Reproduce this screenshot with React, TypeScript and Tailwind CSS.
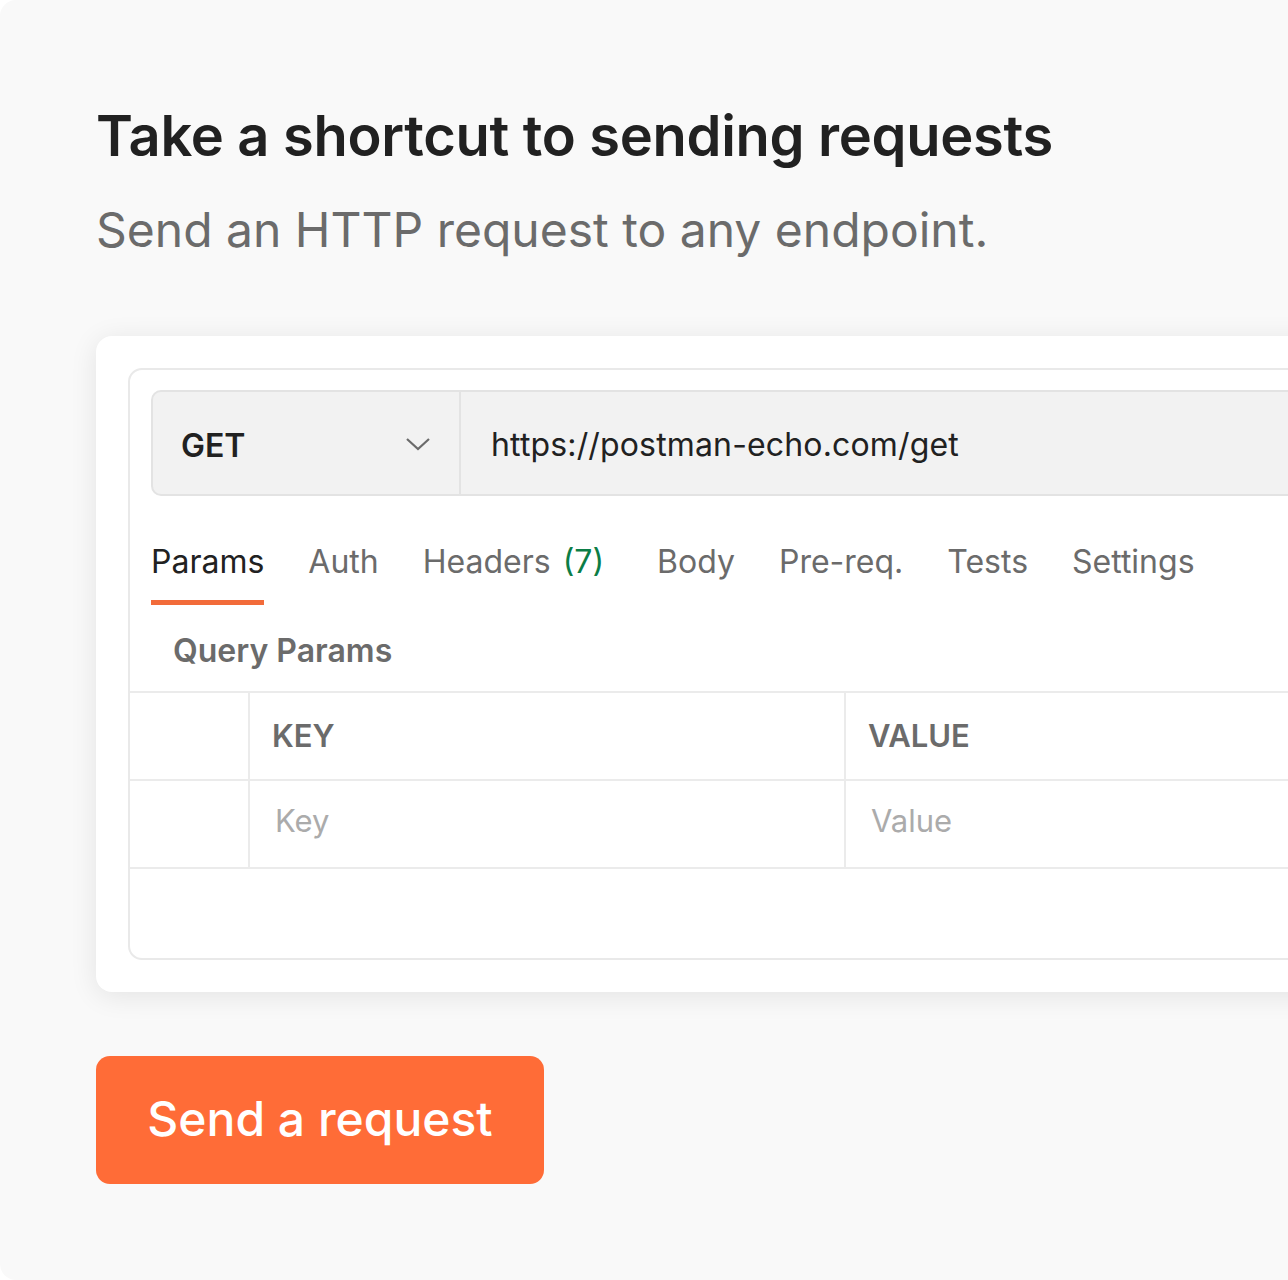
import React from 'react';

const tabs = [
  { label: 'Params', active: true },
  { label: 'Auth' },
  { label: 'Headers', count: '(7)' },
  { label: 'Body' },
  { label: 'Pre-req.' },
  { label: 'Tests' },
  { label: 'Settings' },
];

const App: React.FC = () => {
  return (
    <div className="w-[1288px] h-[1280px] overflow-hidden bg-white font-['Inter','Liberation_Sans',sans-serif]">
      <div className="w-[1400px] h-[1280px] bg-[#f9f9f9] rounded-l-[16px] pl-[96px] pt-[104px]">
        <h1 className="text-[56px] leading-[64px] font-semibold text-[#212121] tracking-[-0.3px]">
          Take a shortcut to sending requests
        </h1>
        <p className="mt-[34px] text-[48px] leading-[56px] text-[#6b6b6b]">
          Send an HTTP request to any endpoint.
        </p>

        <div className="mt-[78px] w-[1300px] h-[656px] bg-white rounded-[16px] shadow-[0_4px_28px_rgba(0,0,0,0.09)] p-[32px]">
          <div className="h-[592px] border-2 border-[#e9e9e9] rounded-[14px] bg-white flex flex-col">
            {/* url bar */}
            <div className="mx-[21px] mt-[20px] h-[106px] flex bg-[#f2f2f2] border-2 border-[#e3e3e3] rounded-[10px]">
              <div className="w-[308px] flex items-center justify-between pl-[28px] pr-[28px] pt-[6px] border-r-2 border-[#e3e3e3]">
                <span className="text-[32px] font-semibold text-[#212121]">GET</span>
                <svg width="26" height="16" viewBox="0 0 26 16" fill="none" className="-mt-[4px]">
                  <path d="M2 3L13 13L24 3" stroke="#6b6b6b" strokeWidth="2.2" />
                </svg>
              </div>
              <div className="flex items-center pl-[30px] pt-[3px] text-[32px] tracking-[0.15px] text-[#212121]">
                https://postman-echo.com/get
              </div>
            </div>

            {/* tabs */}
            <div className="mx-[21px] mt-[46px] flex text-[32px] leading-[40px]">
              {tabs.map((t) => (
                <div key={t.label} className="mr-[44px] flex flex-col">
                  <span className={t.active ? 'text-[#212121]' : 'text-[#6b6b6b]'}>
                    {t.label}
                    {t.count && <span className="ml-[12px] text-[#0b7d46] mr-[9px]">{t.count}</span>}
                  </span>
                  <div className={t.active ? 'mt-[18px] h-[5px] bg-[#f26b3a]' : 'mt-[18px] h-[5px]'} />
                </div>
              ))}
            </div>

            <div className="ml-[43px] mt-[26px] text-[32px] leading-[40px] font-semibold text-[#6b6b6b]">
              Query Params
            </div>

            {/* table */}
            <div className="mt-[20px] border-t-2 border-[#ebebeb]">
              <div className="flex h-[88px] border-b-2 border-[#ebebeb]">
                <div className="w-[120px] border-r-2 border-[#ebebeb]" />
                <div className="w-[596px] border-r-2 border-[#ebebeb] flex items-center pl-[22px] text-[31px] font-semibold text-[#6b6b6b]">
                  KEY
                </div>
                <div className="flex-1 flex items-center pl-[22px] text-[31px] font-semibold text-[#6b6b6b]">
                  VALUE
                </div>
              </div>
              <div className="flex h-[88px] border-b-2 border-[#ebebeb]">
                <div className="w-[120px] border-r-2 border-[#ebebeb]" />
                <div className="w-[596px] border-r-2 border-[#ebebeb] flex items-center pl-[25px] pb-[6px] text-[31px] text-[#ababab]">
                  Key
                </div>
                <div className="flex-1 flex items-center pl-[25px] pb-[6px] text-[31px] text-[#ababab]">
                  Value
                </div>
              </div>
            </div>
          </div>
        </div>

        <button className="mt-[64px] w-[448px] h-[128px] rounded-[14px] bg-[#ff6c37] text-white text-[48px] font-medium flex items-center justify-center pb-[2px]">
          Send a request
        </button>
      </div>
    </div>
  );
};

export default App;
